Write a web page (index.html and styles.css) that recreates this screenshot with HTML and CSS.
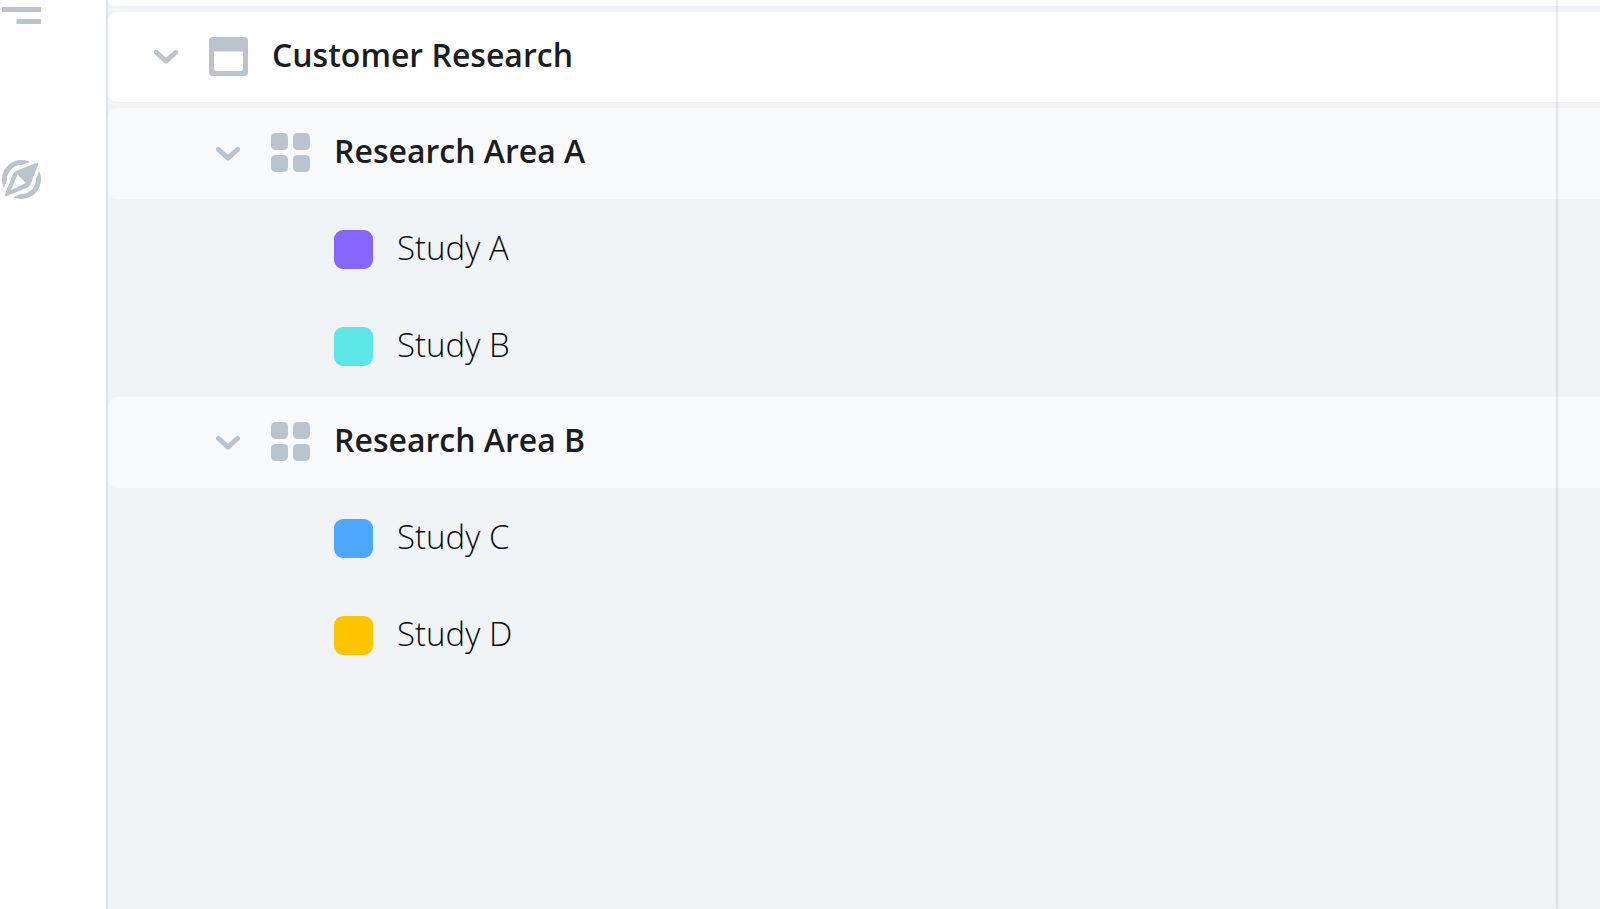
FILE: index.html
```html
<!DOCTYPE html>
<html lang="en">
<head>
  <meta charset="UTF-8">
  <title>Customer Research</title>
  <link rel="stylesheet" href="styles.css">
</head>
<body>
  <nav class="sidebar">
    <button class="nav-button" aria-label="Timeline">
      <svg class="icon" viewBox="0 0 39 39">
        <path d="M0 7h39v5H0zM14.500 19H39v5H14.500z"/>
      </svg>
    </button>
    <button class="nav-button" aria-label="Explore">
      <svg class="icon" viewBox="0 0 39 39">
        <circle class="ring" cx="19.500" cy="19.500" r="17"/>
        <path class="gap" d="M38 1L12 11.500 1 38 27 27.500z"/>
        <path fill-rule="evenodd" d="M34 3Q37 2 36 5L28 25.500Q27.500 26.800 26.200 27.300L5 36Q2 37 3 34L11.500 13Q12 11.800 13.200 11.300zM15.500 14.500L9 30 24 23z"/>
      </svg>
    </button>
  </nav>

  <main class="tree">
    <div class="row row-top"></div>

    <div class="row row-project">
      <button class="toggle" aria-label="Collapse Customer Research">
        <svg class="chevron" viewBox="0 0 24 14"><path d="M2.500 2.500L12 11.200 21.500 2.500"/></svg>
      </button>
      <svg class="icon" viewBox="0 0 39 39">
        <path fill-rule="evenodd" d="M4 0h31a4 4 0 0 1 4 4v31a4 4 0 0 1-4 4H4a4 4 0 0 1-4-4V4a4 4 0 0 1 4-4zM5 14.500V32a2 2 0 0 0 2 2h25a2 2 0 0 0 2-2V14.500z"/>
      </svg>
      <h1 class="name">Customer Research</h1>
    </div>

    <section>
      <div class="row row-area">
        <button class="toggle" aria-label="Collapse Research Area A">
          <svg class="chevron" viewBox="0 0 24 14"><path d="M2.500 2.500L12 11.200 21.500 2.500"/></svg>
        </button>
        <svg class="icon" viewBox="0 0 39 39">
          <rect width="17" height="17" rx="4.500"/>
          <rect x="22" width="17" height="17" rx="4.500"/>
          <rect y="22" width="17" height="17" rx="4.500"/>
          <rect x="22" y="22" width="17" height="17" rx="4.500"/>
        </svg>
        <h2 class="name">Research Area A</h2>
      </div>
      <ul class="studies">
        <li class="study"><span class="swatch purple"></span><span class="label">Study A</span></li>
        <li class="study"><span class="swatch teal"></span><span class="label">Study B</span></li>
      </ul>
    </section>

    <section>
      <div class="row row-area">
        <button class="toggle" aria-label="Collapse Research Area B">
          <svg class="chevron" viewBox="0 0 24 14"><path d="M2.500 2.500L12 11.200 21.500 2.500"/></svg>
        </button>
        <svg class="icon" viewBox="0 0 39 39">
          <rect width="17" height="17" rx="4.500"/>
          <rect x="22" width="17" height="17" rx="4.500"/>
          <rect y="22" width="17" height="17" rx="4.500"/>
          <rect x="22" y="22" width="17" height="17" rx="4.500"/>
        </svg>
        <h2 class="name">Research Area B</h2>
      </div>
      <ul class="studies">
        <li class="study"><span class="swatch blue"></span><span class="label">Study C</span></li>
        <li class="study"><span class="swatch yellow"></span><span class="label">Study D</span></li>
      </ul>
    </section>

    <div class="divider"></div>
  </main>
</body>
</html>
```
FILE: styles.css
```css
* {
  box-sizing: border-box;
}
body {
  display: flex;
  min-height: 100vh;
  margin: 0;
  background-color: #f0f4f7;
  color: #1b1d20;
  font-family: "Open Sans", sans-serif;
  font-size: 32px;
  line-height: 40px;
}
h1, h2, ul {
  margin: 0;
  padding: 0;
}
button {
  padding: 0;
  border: none;
  background: none;
  cursor: pointer;
}

/* left navigation */
.sidebar {
  display: flex;
  flex-direction: column;
  flex-shrink: 0;
  gap: 121px;
  width: 108px;
  padding-left: 2px;
  border-right: 2px solid #dfe3ea;
  background-color: white;
}
.nav-button {
  display: flex;
  width: 39px;
}
.icon {
  flex-shrink: 0;
  width: 39px;
  height: 39px;
  fill: #bbc4cc;
}
.ring {
  fill: none;
  stroke: #bbc4cc;
  stroke-width: 5;
}
.gap {
  fill: white;
  stroke: white;
  stroke-width: 6;
}

/* project tree */
.tree {
  position: relative;
  flex: 1;
}
.row {
  display: flex;
  align-items: center;
  height: 90px;
  margin-bottom: 6px;
  border-radius: 9px 0 0 9px;
}
.row .icon {
  margin-bottom: 2px;
}
.row-top {
  height: 6px;
  border-radius: 0 0 0 9px;
  background-color: white;
}
.row-project {
  padding-left: 46px;
  background-color: white;
}
.row-area {
  height: 91px;
  margin-bottom: 2px;
  padding-left: 108px;
  background-color: #f8f9fb;
}
.toggle {
  display: flex;
  margin-right: 31px;
}
.chevron {
  width: 24px;
  height: 14px;
  fill: none;
  stroke: #bbc4cc;
  stroke-width: 5;
  stroke-linecap: round;
  stroke-linejoin: round;
}
.name {
  margin-left: 24px;
  padding-bottom: 5px;
  font-size: 32px;
  font-weight: 600;
}
.studies {
  margin-bottom: 2px;
  list-style: none;
}
.study {
  display: flex;
  align-items: center;
  gap: 24px;
  height: 97px;
  padding-left: 226px;
  color: #0a0b0c;
  font-size: 33px;
  font-weight: 300;
}
.label {
  padding-bottom: 4px;
}
.swatch {
  width: 39px;
  height: 39px;
  border-radius: 9px;
}
.purple {
  background-color: #8566ff;
}
.teal {
  background-color: #5ce6e6;
}
.blue {
  background-color: #4da6ff;
}
.yellow {
  background-color: #ffc400;
}

/* column edge drawn over the rows */
.divider {
  position: absolute;
  top: 0;
  right: 42px;
  bottom: 0;
  width: 2px;
  background-color: rgba(60, 60, 80, 0.09);
  box-shadow: 0 0 2px rgba(60, 60, 80, 0.08);
}
```
